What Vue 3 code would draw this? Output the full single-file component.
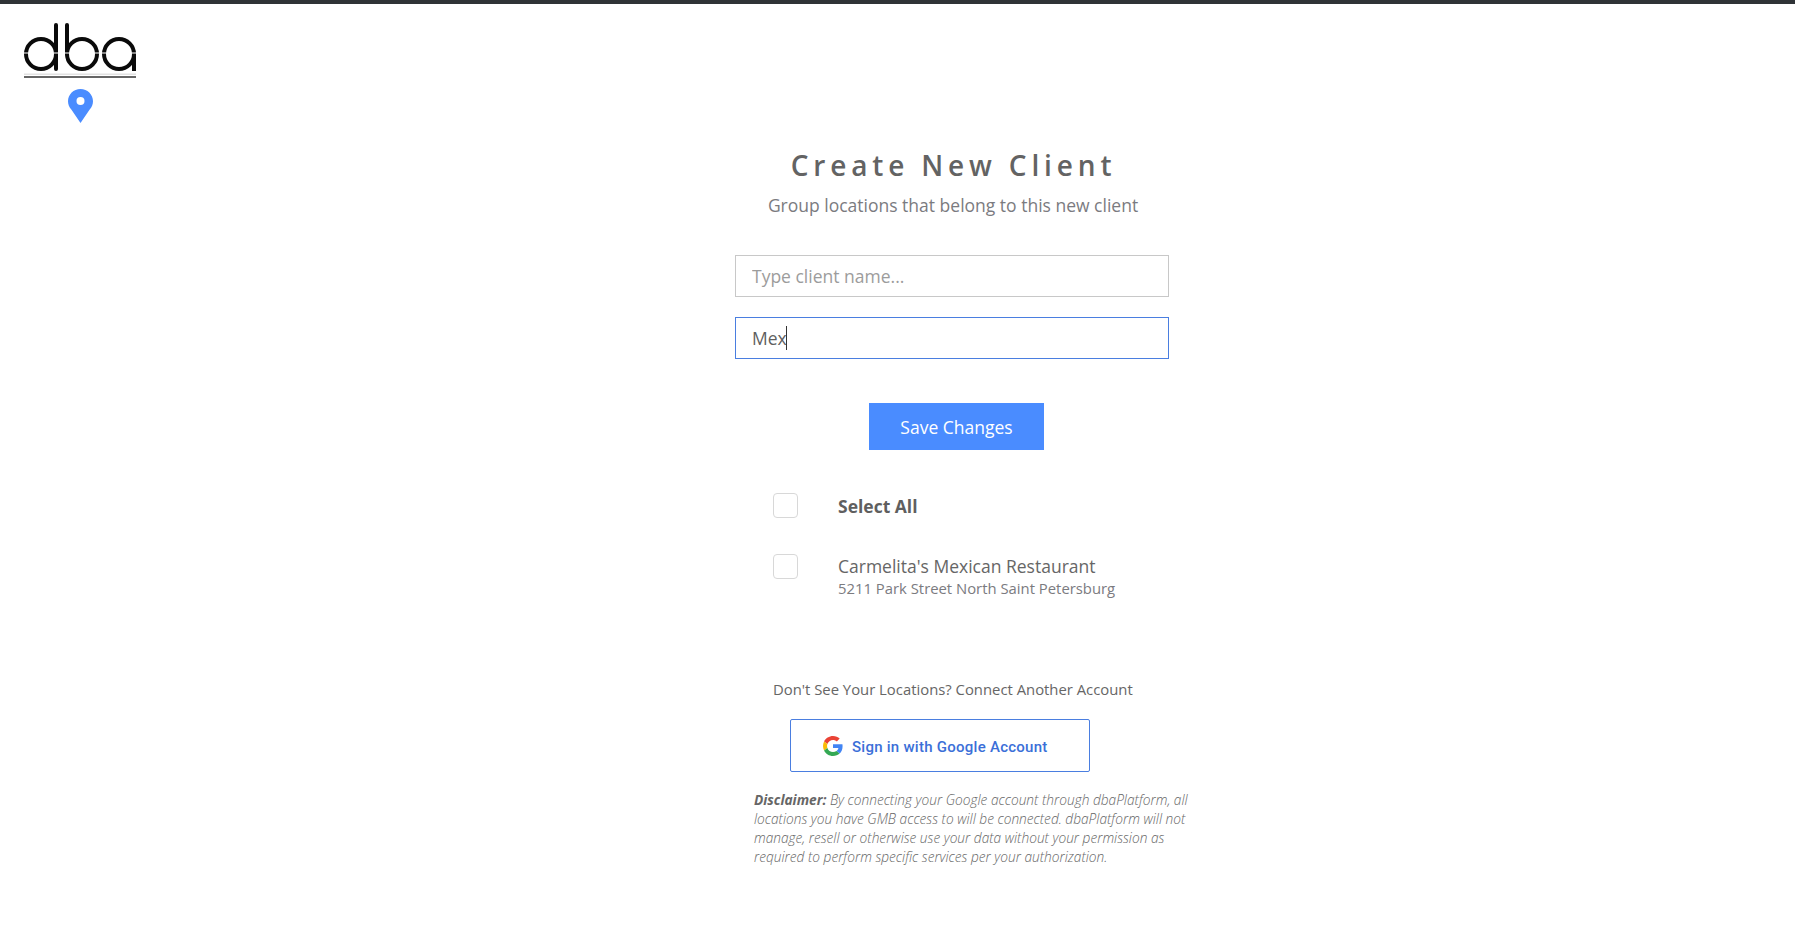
<template>
  <div class="page">
    <header class="topbar">
      <div class="brand">
        <svg class="logo" width="112" height="56" viewBox="0 0 112 56" aria-label="dba">
          <g fill="none" stroke="#0a0a0a" stroke-width="4">
            <circle cx="17" cy="31" r="15" />
            <path d="M32 2v44" stroke-linecap="round" />
            <circle cx="58" cy="31" r="15" />
            <path d="M43 2v29" stroke-linecap="round" />
            <circle cx="95" cy="31" r="15" />
            <path d="M110 31v17" />
          </g>
          <rect x="0" y="29.500" width="112" height="1" fill="#fff" />
          <rect x="0" y="50.500" width="112" height="1.500" fill="#e2e2e2" />
          <rect x="0" y="53" width="112" height="2" fill="#666" />
        </svg>
        <svg class="pin" width="25" height="34" viewBox="0 0 25 34">
          <path
            d="M12.5 0C5.6 0 0 5.5 0 12.3c0 3.2 1.2 6 3.3 8.300L12.500 34l9.200-13.400c2.100-2.300 3.300-5.100 3.300-8.300C25 5.500 19.400 0 12.500 0z"
            fill="#4a8cff"
          />
          <circle cx="12.500" cy="12" r="4" fill="#fff" />
        </svg>
      </div>
    </header>

    <main class="content">
      <h1 class="title">Create New Client</h1>
      <p class="subtitle">Group locations that belong to this new client</p>

      <form class="fields" @submit.prevent>
        <input class="field" type="text" placeholder="Type client name..." />
        <div class="field-wrap">
          <input class="field active" type="text" value="Mex" />
          <span class="caret"></span>
        </div>
        <button class="save-btn" type="submit">Save Changes</button>
      </form>

      <ul class="locations">
        <li class="loc-row">
          <span class="check"></span>
          <strong>Select All</strong>
        </li>
        <li v-for="loc in locations" :key="loc.name" class="loc-row">
          <span class="check"></span>
          <div class="loc-text">
            <span class="loc-name">{{ loc.name }}</span>
            <span class="loc-address">{{ loc.address }}</span>
          </div>
        </li>
      </ul>

      <section class="connect">
        <p class="connect-text">Don't See Your Locations? Connect Another Account</p>
        <button class="google-btn" type="button">
          <svg width="20" height="20" viewBox="0 0 48 48">
            <path fill="#EA4335" d="M24 9.500c3.540 0 6.710 1.220 9.210 3.600l6.850-6.850C35.900 2.380 30.470 0 24 0 14.620 0 6.510 5.380 2.560 13.220l7.980 6.190C12.430 13.720 17.740 9.500 24 9.500z" />
            <path fill="#4285F4" d="M46.980 24.550c0-1.570-.15-3.090-.38-4.550H24v9.020h12.940c-.58 2.960-2.260 5.480-4.780 7.180l7.730 6c4.510-4.180 7.090-10.360 7.090-17.650z" />
            <path fill="#FBBC05" d="M10.530 28.590c-.48-1.450-.76-2.990-.76-4.590s.27-3.140.76-4.590l-7.980-6.190C.92 16.460 0 20.120 0 24c0 3.880.92 7.540 2.560 10.780l7.970-6.190z" />
            <path fill="#34A853" d="M24 48c6.480 0 11.930-2.130 15.890-5.810l-7.730-6c-2.150 1.450-4.920 2.300-8.160 2.300-6.260 0-11.570-4.220-13.470-9.910l-7.980 6.190C6.510 42.620 14.620 48 24 48z" />
          </svg>
          <span class="google-label">Sign in with Google Account</span>
        </button>
        <p class="disclaimer">
          <b>Disclaimer:</b> By connecting your Google account through dbaPlatform, all
          locations you have GMB access to will be connected. dbaPlatform will not
          manage, resell or otherwise use your data without your permission as
          required to perform specific services per your authorization.
        </p>
      </section>
    </main>
  </div>
</template>

<script setup>
const locations = [
  { name: "Carmelita's Mexican Restaurant", address: '5211 Park Street North Saint Petersburg' },
]
</script>

<style>
html,
body {
  margin: 0;
  background: #fff;
}
</style>

<style scoped>
.page {
  min-height: 939px;
  border-top: 4px solid #2f3336;
  box-sizing: border-box;
  font-family: 'Open Sans', sans-serif;
  color: #5a5a5a;
  overflow: hidden;
}

.topbar {
  height: 121px;
  padding: 19px 0 0 24px;
  box-sizing: border-box;
}

.brand {
  display: flex;
  flex-direction: column;
  align-items: center;
  width: 112px;
  gap: 10px;
}

.logo,
.pin {
  display: block;
}

.content {
  width: 434px;
  margin-left: 735px;
}

.title {
  margin: 21px 0 0;
  padding-left: 3px;
  text-align: center;
  font-size: 28px;
  line-height: 38px;
  font-weight: 600;
  letter-spacing: 4.85px;
  color: #636363;
}

.subtitle {
  margin: 8px 0 0;
  padding-left: 2px;
  text-align: center;
  font-size: 17.5px;
  line-height: 26px;
  color: #7b7b7f;
}

.fields {
  display: flex;
  flex-direction: column;
  margin-top: 37px;
  gap: 20px;
}

.field-wrap {
  position: relative;
}

.field {
  display: block;
  width: 100%;
  height: 42px;
  box-sizing: border-box;
  padding: 0 16px;
  border: 1px solid #c8c8c8;
  outline: none;
  border-radius: 0;
  font-family: inherit;
  font-size: 17.5px;
  color: #5f5f5f;
}

.field::placeholder {
  color: #9c9c9c;
  opacity: 1;
}

.field.active {
  border-color: #4a7ee0;
}

.caret {
  position: absolute;
  left: 51px;
  top: 9px;
  width: 1px;
  height: 24px;
  background: #333;
}

.save-btn {
  align-self: flex-start;
  width: 175px;
  height: 47px;
  margin: 24px 0 0 134px;
  border: none;
  background: #4a8cff;
  color: #fff;
  font-family: inherit;
  font-size: 17.5px;
  cursor: pointer;
}

.locations {
  list-style: none;
  margin: 43px 0 0;
  padding: 0;
  display: flex;
  flex-direction: column;
  gap: 36px;
}

.loc-row {
  display: flex;
  gap: 40px;
  padding-left: 38px;
  align-items: flex-start;
}

.loc-row strong {
  margin: 1px 0 -1px;
  font-size: 17.5px;
  line-height: 25px;
  font-weight: 700;
  color: #5f5f5f;
}

.check {
  flex: none;
  width: 25px;
  height: 25px;
  box-sizing: border-box;
  border: 1px solid #d8d8d8;
  border-radius: 4px;
  background: #fff;
}

.loc-text {
  display: flex;
  flex-direction: column;
}

.loc-name {
  font-size: 17.5px;
  line-height: 25px;
  color: #666;
  white-space: nowrap;
}

.loc-address {
  font-size: 14.85px;
  line-height: 19px;
  color: #7b7b7f;
  white-space: nowrap;
}

.connect {
  margin-top: 81px;
}

.connect-text {
  margin: 0 0 0 38px;
  font-size: 14.85px;
  line-height: 20px;
  color: #666;
  white-space: nowrap;
}

.google-btn {
  display: flex;
  align-items: center;
  gap: 9px;
  width: 300px;
  height: 53px;
  margin: 20px 0 0 55px;
  padding: 0 0 0 32px;
  box-sizing: border-box;
  border: 1px solid #4a7ee0;
  border-radius: 2px;
  background: #fff;
  color: #3b6fd8;
  font-family: Roboto, sans-serif;
  font-size: 15px;
  font-weight: 500;
  letter-spacing: 0.26px;
  cursor: pointer;
}

.google-label {
  margin-top: 2px;
}

.disclaimer {
  width: 445px;
  margin: 18px 0 0 19px;
  font-size: 13.7px;
  line-height: 19px;
  font-style: italic;
  font-weight: 300;
  color: #666;
}

.disclaimer b {
  font-weight: 700;
}
</style>
